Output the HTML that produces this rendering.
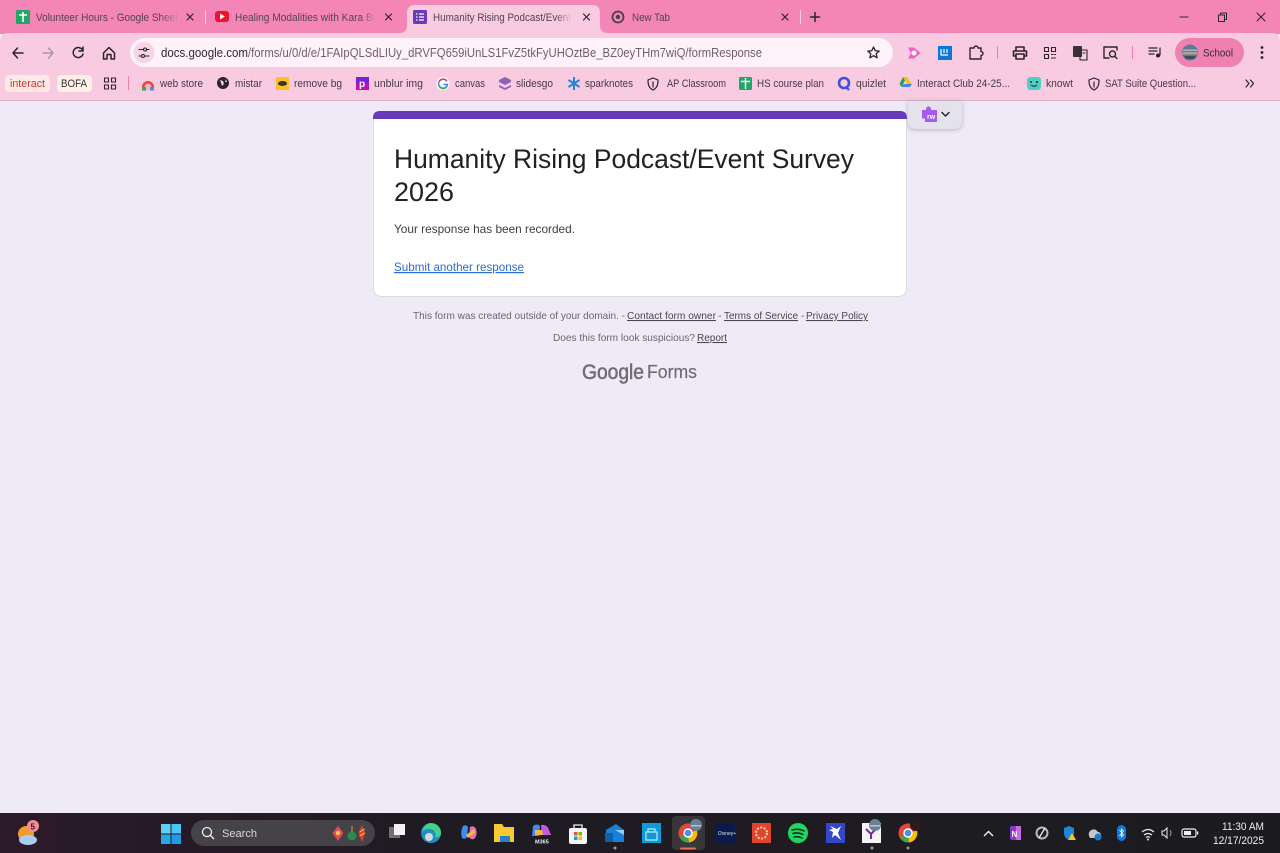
<!DOCTYPE html>
<html><head><meta charset="utf-8"><title>Humanity Rising Podcast/Event Survey 2026</title>
<style>
html,body{margin:0;padding:0;width:1280px;height:853px;overflow:hidden;background:#efeaf8}
svg{display:block;position:absolute;left:0;top:0}
text{font-family:"Liberation Sans",sans-serif}
.t{font-size:11px;fill:#54444e}
.tb{font-size:11px;fill:#463a42}
.ic{fill:none;stroke:#2c2428;stroke-linecap:round;stroke-linejoin:round}
.ft{font-size:10.5px;fill:#6a666c}
.fl{font-size:10.5px;fill:#4a464c;text-decoration:underline}
</style></head><body>
<svg width="1280" height="853" viewBox="0 0 1280 853" xmlns="http://www.w3.org/2000/svg">
<defs>
<linearGradient id="tbg" x1="0" x2="1" y1="0" y2="0"><stop offset="0" stop-color="#2b1a2b"/><stop offset=".35" stop-color="#1f1b22"/><stop offset="1" stop-color="#1c1c20"/></linearGradient>
<linearGradient id="f1" x1="0" x2="1" y1="0" y2="0"><stop offset="0" stop-color="#f386b6" stop-opacity="0"/><stop offset="1" stop-color="#f386b6"/></linearGradient>
<linearGradient id="f2" x1="0" x2="1" y1="0" y2="0"><stop offset="0" stop-color="#f8cbe0" stop-opacity="0"/><stop offset="1" stop-color="#f8cbe0"/></linearGradient>
</defs>
<rect width="1280" height="853" fill="#efeaf8"/>
<!-- chrome -->
<rect width="1280" height="34" fill="#f386b6"/>
<path d="M0 100V42Q0 33 9 33H1271Q1280 33 1280 42V100Z" fill="#f8cbe0"/>
<rect y="100" width="1280" height="1" fill="#d9b6c9"/>
<!-- active tab -->
<path d="M399 33Q407 33 407 25V13Q407 5 415 5H592Q600 5 600 13V25Q600 33 608 33Z" fill="#f8cbe0"/>
<!-- tab 1 -->
<rect x="16" y="10" width="14" height="14" rx="1.5" fill="#23a566"/><path d="M23 12V22M19 15H27" stroke="#fff" stroke-width="1.6"/>
<text x="36" y="21" class="t" textLength="142" lengthAdjust="spacingAndGlyphs">Volunteer Hours - Google Sheet</text>
<rect x="160" y="8" width="19" height="18" fill="url(#f1)"/>
<path d="M187 14l6 6M193 14l-6 6" class="ic" stroke-width="1.2"/>
<rect x="205" y="10" width="1" height="14" fill="#fbd0e2"/>
<!-- tab 2 -->
<rect x="215" y="11" width="14" height="11" rx="3" fill="#f00f2c"/><path d="M220 13.5v6l5-3z" fill="#fff"/>
<text x="235" y="21" class="t" textLength="140" lengthAdjust="spacingAndGlyphs">Healing Modalities with Kara Bi</text>
<rect x="360" y="8" width="16" height="18" fill="url(#f1)"/>
<path d="M385.500 14l6 6M391.500 14l-6 6" class="ic" stroke-width="1.2"/>
<!-- tab 3 -->
<rect x="413" y="10" width="14" height="14" rx="1.5" fill="#673ab7"/><path d="M416 14h1.4M416 17h1.4M416 20h1.4M419 14h5M419 17h5M419 20h5" stroke="#fff" stroke-width="1.3"/>
<text x="433" y="21" class="t" textLength="138" lengthAdjust="spacingAndGlyphs">Humanity Rising Podcast/Event</text>
<rect x="556" y="8" width="16" height="18" fill="url(#f2)"/>
<path d="M583.500 14l6 6M589.500 14l-6 6" class="ic" stroke-width="1.2"/>
<!-- tab 4 -->
<circle cx="618" cy="17" r="5.500" fill="none" stroke="#4a4048" stroke-width="1.800"/><circle cx="618" cy="17" r="2.200" fill="#4a4048"/>
<text x="632" y="21" class="t" textLength="38" lengthAdjust="spacingAndGlyphs">New Tab</text>
<path d="M782 14l6 6M788 14l-6 6" class="ic" stroke-width="1.2"/>
<rect x="800" y="10" width="1" height="14" fill="#fbd0e2"/>
<path d="M815 12.500v9M810.500 17h9" class="ic" stroke-width="1.500"/>
<!-- window controls -->
<path d="M1180 17h8" class="ic" stroke-width="1"/>
<path d="M1218.500 15h6v6.500h-6zM1220.500 15v-2h6v6.500h-2" class="ic" stroke-width="1"/>
<path d="M1257 13l8 8M1265 13l-8 8" class="ic" stroke-width="1"/>
<!-- nav -->
<path d="M23 53H13M17.500 48L13 53l4.500 5" class="ic" stroke-width="1.500"/>
<path d="M43 53h10M48.500 48L53 53l-4.500 5" fill="none" stroke="#b095a4" stroke-width="1.500" stroke-linecap="round" stroke-linejoin="round"/>
<path d="M82.500 50a5 5 0 1 0 .5 4M83 47v4h-4" class="ic" stroke-width="1.500"/>
<path d="M103.500 53L109 47.500 114.500 53V59H111V54.500H107V59H103.500Z" class="ic" stroke-width="1.500"/>
<!-- omnibox -->
<rect x="130" y="38" width="763" height="29" rx="14.500" fill="#fff2f8"/>
<circle cx="144" cy="52.500" r="10.500" fill="#f8d5e6"/>
<path d="M139 49.500h4M147 49.500h2M139 56h2M145 56h4" class="ic" stroke-width="1.100"/><circle cx="145" cy="49.500" r="1.500" class="ic" stroke-width="1.100"/><circle cx="143" cy="56" r="1.500" class="ic" stroke-width="1.100"/>
<text x="161" y="57" font-size="13" fill="#32282e" textLength="87" lengthAdjust="spacingAndGlyphs">docs.google.com</text>
<text x="248" y="57" font-size="13" fill="#6f6068" textLength="514" lengthAdjust="spacingAndGlyphs">/forms/u/0/d/e/1FAIpQLSdLIUy_dRVFQ659iUnLS1FvZ5tkFyUHOztBe_BZ0eyTHm7wiQ/formResponse</text>
<path d="M873.500 47l1.700 3.700 4 .4-3 2.700.9 4-3.600-2.100-3.600 2.100.9-4-3-2.700 4-.4z" class="ic" stroke-width="1.300"/>
<!-- ext icons -->
<path d="M908 47.500h6l6.500 5.500-6.500 5.500h-6l3-5.500z" fill="#f060c8"/><circle cx="914" cy="53" r="2.500" fill="#fff"/>
<rect x="938" y="46" width="14" height="14" fill="#0a78d8"/><path d="M941 49v6h7M944 49v4M947 49v4" stroke="#fff" stroke-width="1.200" fill="none"/>
<path d="M970 48h4a2 2 0 0 1 4 0h3v3.500a2 2 0 0 1 0 4V59h-11z" class="ic" stroke-width="1.400"/>
<rect x="997" y="46" width="1" height="13" fill="#ee7fb0"/>
<path d="M1016 51v-4h8v4M1016 56h-2.500v-5h13v5H1024M1016 54h8v5h-8z" class="ic" stroke-width="1.600"/>
<path d="M1044.500 47.500h4v4h-4zM1051.500 47.500h4v4h-4zM1044.500 54.500h4v4h-4zM1051.500 54.500h1.500M1054.500 54.500h1M1051.500 58h4" class="ic" stroke-width="1.100"/>
<rect x="1073" y="46" width="9" height="11" rx="1" fill="#3a3036"/><path d="M1082 50h5v10h-7v-3" class="ic" stroke-width="1.100"/><path d="M1083 53h2" class="ic" stroke-width="1"/>
<path d="M1109 58h-5V47h13v3" class="ic" stroke-width="1.400"/><circle cx="1112.500" cy="54" r="3" class="ic" stroke-width="1.400"/><path d="M1115 56.500l2 2" class="ic" stroke-width="1.400"/>
<rect x="1132" y="46" width="1" height="13" fill="#ee7fb0"/>
<path d="M1149 48h8M1149 51h8M1149 54h5" class="ic" stroke-width="1.200"/><path d="M1160 48v7" class="ic" stroke-width="1.200"/><circle cx="1158" cy="55.500" r="2" fill="#2c2428"/>
<rect x="1175" y="38" width="69" height="29" rx="14.500" fill="#ee81b1"/>
<circle cx="1190" cy="52.500" r="8" fill="#5f7a92"/><path d="M1182.500 52h15v2.500h-15z" fill="#b9a08e"/><path d="M1183 49.500h14v1.500h-14z" fill="#a5b8c8"/><path d="M1184 56h12l-2 3h-8z" fill="#3c4f60"/>
<text x="1203" y="56.500" font-size="11" fill="#3c2c36" textLength="30" lengthAdjust="spacingAndGlyphs">School</text>
<circle cx="1262" cy="47.500" r="1.400" fill="#2c2428"/><circle cx="1262" cy="52.500" r="1.400" fill="#2c2428"/><circle cx="1262" cy="57.500" r="1.400" fill="#2c2428"/>
<!-- bookmarks -->
<rect x="5" y="75" width="45" height="17" rx="4" fill="#fdeae6"/>
<text x="10" y="87" font-size="11" fill="#d3322c" textLength="35" lengthAdjust="spacingAndGlyphs">interact</text>
<rect x="57" y="75" width="35" height="17" rx="4" fill="#fdf0e4"/>
<text x="61" y="87" font-size="11" fill="#3c3038" textLength="26" lengthAdjust="spacingAndGlyphs">BOFA</text>
<path d="M104.500 78h4v4h-4zM111.500 78h4v4h-4zM104.500 85h4v4h-4zM111.500 85h4v4h-4z" class="ic" stroke-width="1.100"/>
<rect x="128" y="76" width="1" height="14" fill="#ee7fb0"/>
<path d="M142 90v-3a6 6 0 0 1 12 0v3z" fill="#e9b9c8"/><path d="M142 87a6 6 0 0 1 6-6 6 6 0 0 1 6 6h-2.500a3.500 3.500 0 0 0-7 0z" fill="#e8453c"/><rect x="142" y="87" width="4" height="3.500" fill="#34a853"/><rect x="150" y="87" width="4" height="3.500" fill="#4a90e2"/>
<text x="160" y="87" class="tb" textLength="43" lengthAdjust="spacingAndGlyphs">web store</text>
<circle cx="223" cy="83" r="6" fill="#2c2428"/><path d="M220 80l3 1 1 3-2 2zM226 79l1 3-2 0z" fill="#f8cbe0"/>
<text x="235" y="87" class="tb" textLength="27" lengthAdjust="spacingAndGlyphs">mistar</text>
<rect x="276" y="77" width="13" height="13" rx="1" fill="#f8c02c"/><ellipse cx="282.500" cy="83.500" rx="4.500" ry="2.500" fill="#3e3420"/>
<text x="294" y="87" class="tb" textLength="48" lengthAdjust="spacingAndGlyphs">remove bg</text>
<rect x="356" y="77" width="13" height="13" fill="#7a1fd8"/><rect x="356" y="84" width="13" height="6" fill="#c012b0"/><text x="359" y="87" font-size="10" font-weight="bold" fill="#fff">p</text>
<text x="374" y="87" class="tb" textLength="49" lengthAdjust="spacingAndGlyphs">unblur img</text>
<circle cx="443" cy="83.500" r="6.500" fill="#fff"/><path d="M447 81.500a4.500 4.500 0 1 0 .5 3h-4" fill="none" stroke="#4285f4" stroke-width="1.500"/><path d="M439.500 81a4.500 4.500 0 0 1 7-.5" fill="none" stroke="#ea4335" stroke-width="1.500"/><path d="M439 85.500a4.500 4.500 0 0 0 7 2" fill="none" stroke="#34a853" stroke-width="1.500"/>
<text x="455" y="87" class="tb" textLength="30" lengthAdjust="spacingAndGlyphs">canvas</text>
<path d="M505 77l6 3v2l-6 3-6-3v-2zM499 85l6 3 6-3v2l-6 3-6-3z" fill="#8f62b8"/>
<text x="516" y="87" class="tb" textLength="37" lengthAdjust="spacingAndGlyphs">slidesgo</text>
<path d="M574 77v13M568.500 80l11 7M579.500 80l-11 7" stroke="#2583d8" stroke-width="2" fill="none"/>
<text x="585" y="87" class="tb" textLength="48" lengthAdjust="spacingAndGlyphs">sparknotes</text>
<path d="M653 78l5 2c0 5-1 8-5 10-4-2-5-5-5-10zM653 82v5" class="ic" stroke-width="1.200"/>
<text x="667" y="87" class="tb" textLength="59" lengthAdjust="spacingAndGlyphs">AP Classroom</text>
<rect x="739" y="77" width="13" height="13" rx="1.500" fill="#23a566"/><path d="M745.500 78v11M741 81.500h9" stroke="#fff" stroke-width="1.400"/>
<text x="757" y="87" class="tb" textLength="67" lengthAdjust="spacingAndGlyphs">HS course plan</text>
<circle cx="844" cy="83" r="5" fill="none" stroke="#3d4fe0" stroke-width="2.600"/><path d="M846 87l3 3" stroke="#3d4fe0" stroke-width="2.200"/>
<text x="856" y="87" class="tb" textLength="30" lengthAdjust="spacingAndGlyphs">quizlet</text>
<path d="M903 77h4l5 8h-4z" fill="#fbbc04"/><path d="M903 77l2 3.500-3.500 6.500-2-3z" fill="#1ea362"/><path d="M901.500 87l2-3h8.500l-2 3z" fill="#4285f4"/>
<text x="917" y="87" class="tb" textLength="93" lengthAdjust="spacingAndGlyphs">Interact Club 24-25...</text>
<rect x="1027" y="77" width="14" height="13" rx="3" fill="#4fcfc0"/><circle cx="1031" cy="82" r="1" fill="#223"/><circle cx="1037" cy="82" r="1" fill="#223"/><path d="M1031 85q3 2.500 6 0" stroke="#223" fill="none"/>
<text x="1046" y="87" class="tb" textLength="27" lengthAdjust="spacingAndGlyphs">knowt</text>
<path d="M1094 78l5 2c0 5-1 8-5 10-4-2-5-5-5-10zM1094 82v5" class="ic" stroke-width="1.200"/>
<text x="1105" y="87" class="tb" textLength="91" lengthAdjust="spacingAndGlyphs">SAT Suite Question...</text>
<path d="M1246 80l3 3.500-3 3.500M1250.500 80l3 3.500-3 3.500" class="ic" stroke-width="1.200"/>
<!-- floating extension -->
<path d="M908 101h54v20q0 8-8 8h-38q-8 0-8-8z" fill="#e4e2ec" filter="drop-shadow(0 1px 2px rgba(0,0,0,.25))"/>
<path d="M922 110h4v-1a2.500 2.500 0 0 1 5 0v1h6v12h-12v-3.500h-3z" fill="#a45cf0"/>
<text x="927" y="119" font-size="7" font-weight="bold" fill="#fff">rw</text>
<path d="M942 112.500l3.500 3.500 3.500-3.500" class="ic" stroke-width="1.500"/>
<!-- card -->
<rect x="373.500" y="111.500" width="533" height="185" rx="8" fill="#fff" stroke="#dadce0"/>
<path d="M373 119v-1q0-7 7-7h520q7 0 7 7v1z" fill="#673ab7"/>
<text x="394" y="168" font-size="27" fill="#202124" textLength="460" lengthAdjust="spacingAndGlyphs">Humanity Rising Podcast/Event Survey</text>
<text x="394" y="201" font-size="27" fill="#202124" textLength="60" lengthAdjust="spacingAndGlyphs">2026</text>
<text x="394" y="233" font-size="12" fill="#3c4043" textLength="181" lengthAdjust="spacingAndGlyphs">Your response has been recorded.</text>
<text x="394" y="271" font-size="12" fill="#2a6fd8" text-decoration="underline" textLength="130" lengthAdjust="spacingAndGlyphs">Submit another response</text>
<!-- footer -->
<text x="413" y="319" class="ft" textLength="212" lengthAdjust="spacingAndGlyphs">This form was created outside of your domain. -</text>
<text x="627" y="319" class="fl" textLength="89" lengthAdjust="spacingAndGlyphs">Contact form owner</text>
<text x="718" y="319" class="ft">-</text>
<text x="724" y="319" class="fl" textLength="74" lengthAdjust="spacingAndGlyphs">Terms of Service</text>
<text x="801" y="319" class="ft">-</text>
<text x="806" y="319" class="fl" textLength="62" lengthAdjust="spacingAndGlyphs">Privacy Policy</text>
<text x="553" y="341" class="ft" textLength="142" lengthAdjust="spacingAndGlyphs">Does this form look suspicious?</text>
<text x="697" y="341" class="fl" textLength="30" lengthAdjust="spacingAndGlyphs">Report</text>
<text x="582" y="379" font-size="21" fill="#6f6d72" stroke="#6f6d72" stroke-width=".5" textLength="62" lengthAdjust="spacingAndGlyphs">Google</text>
<text x="647" y="378" font-size="18" fill="#6f6d72" stroke="#6f6d72" stroke-width=".2" textLength="50" lengthAdjust="spacingAndGlyphs">Forms</text>
<!-- taskbar -->
<rect y="813" width="1280" height="40" fill="url(#tbg)"/>
<circle cx="26" cy="834" r="8" fill="#f29a2e"/><ellipse cx="28" cy="840" rx="9" ry="5" fill="#a8cdf0"/><circle cx="33" cy="826" r="6" fill="#f48a96"/><text x="30.500" y="829.500" font-size="8" font-weight="bold" fill="#2a1a20">5</text>
<rect x="161" y="824" width="9.500" height="9.500" fill="#5ed0f8"/><rect x="171.500" y="824" width="9.500" height="9.500" fill="#4cc4f5"/><rect x="161" y="834.500" width="9.500" height="9.500" fill="#28a6ea"/><rect x="171.500" y="834.500" width="9.500" height="9.500" fill="#1f9ae5"/>
<rect x="191" y="820" width="184" height="26" rx="13" fill="#454347"/>
<circle cx="207" cy="832" r="4.500" fill="none" stroke="#eee" stroke-width="1.300"/><path d="M210.500 835.500l3.500 3.500" stroke="#eee" stroke-width="1.300"/>
<text x="222" y="837" font-size="11" fill="#d8d6da" textLength="35" lengthAdjust="spacingAndGlyphs">Search</text>
<path d="M338 826l5.500 7-5.500 8-5.500-8z" fill="#e24a5a"/><circle cx="338" cy="833" r="2.200" fill="#f5d040"/><circle cx="352" cy="836" r="4.500" fill="#2c8a50"/><path d="M352 826v6" stroke="#c8a040" stroke-width="1"/><path d="M362 825l3.500 8-3.500 9-3.500-9z" fill="#d8442c"/><path d="M359.500 832l5-3M359.500 836l5-3" stroke="#f5d040" stroke-width="1"/>
<rect x="389" y="827" width="11" height="11" fill="#707074"/><rect x="394" y="824" width="11" height="11" fill="#f2f2f2"/>
<circle cx="431" cy="833" r="10" fill="#1a8fc8"/><path d="M431 823a10 10 0 0 1 10 10c0 3-3 5-6 4 2-4-1-8-6-8-4 0-6 2-7 3 1-5 5-9 9-9z" fill="#47d08a"/><circle cx="429" cy="837" r="4" fill="#d8d8d8"/>
<path d="M463 826q3-2 5 1l-1 10q-2 3-5 1-2-6 1-12z" fill="#3f8cf0"/><path d="M470 827q4-2 6 2 2 6-2 10-3 1-5-2z" fill="#e96ac0"/><path d="M466 835l8-6 1 4-7 5z" fill="#f5b640"/>
<path d="M494 824h8l2 3h10v15h-20z" fill="#f8c930"/><rect x="500" y="836" width="10" height="6" fill="#2382c8"/>
<path d="M533 826q4-3 7 0l-1 10h-7z" fill="#3f8cf0"/><path d="M541 825q6-1 8 5l2 5h-9z" fill="#c85ae0"/><path d="M535 830l7 0 1 5h-8z" fill="#f5b640"/><text x="535" y="843.500" font-size="5.500" font-weight="bold" fill="#eee">M365</text>
<rect x="569" y="828" width="18" height="16" rx="2" fill="#f5f5f5"/><path d="M574 828v-3h8v3" fill="none" stroke="#eee" stroke-width="1.300"/><rect x="574" y="832" width="3.500" height="3.500" fill="#e8502a"/><rect x="578.500" y="832" width="3.500" height="3.500" fill="#7ab800"/><rect x="574" y="836.500" width="3.500" height="3.500" fill="#00a4ef"/><rect x="578.500" y="836.500" width="3.500" height="3.500" fill="#ffb900"/>
<path d="M606 830l10-6 8 6v12h-18z" fill="#1a7fd8"/><rect x="605" y="833" width="8" height="9" fill="#0f5fa8"/><path d="M615 830h9v5z" fill="#8fd0f5"/><circle cx="615" cy="848" r="1.500" fill="#999"/>
<rect x="642" y="823" width="19" height="20" fill="#0d9bd8"/><path d="M646 832h11v8h-11zM648 829h7v3h-7z" fill="none" stroke="#bfe6f8" stroke-width="1.200"/>
<rect x="672" y="816" width="33" height="34" rx="4" fill="#38363a"/>
<circle cx="688" cy="833" r="9.500" fill="#e8463a"/><path d="M688 833l-8.200 4.500A9.500 9.500 0 0 0 689 842.500z" fill="#34a853"/><path d="M688 833l8.800-2.500A9.500 9.500 0 0 1 689 842.500z" fill="#fbbc04"/><circle cx="688" cy="833" r="4" fill="#4a90e8" stroke="#fff" stroke-width="1.400"/>
<circle cx="696" cy="825" r="6" fill="#6a8094"/><path d="M691 825h10v1.500h-10z" fill="#b9c4ce"/>
<rect x="680" y="847.500" width="16" height="2" rx="1" fill="#e8704a"/>
<rect x="715" y="823" width="20" height="20" fill="#0b1a4a"/><text x="718" y="835" font-size="5" fill="#cfe0f8">Disney+</text>
<rect x="752" y="823" width="19" height="20" fill="#e0452a"/><circle cx="761.500" cy="833" r="5.500" fill="none" stroke="#f8d0c0" stroke-width="2" stroke-dasharray="2 1.500"/>
<circle cx="798" cy="833" r="10" fill="#1ed760"/><path d="M792 830q6-2 12 1M793 833.500q5-1.500 10 1M794 837q4-1 8 1" stroke="#18261c" stroke-width="1.500" fill="none" stroke-linecap="round"/>
<rect x="826" y="823" width="19" height="20" fill="#3347c8"/><path d="M830 826l7 3 4-3-3 7 3 7-6-5-3 3 1-6-4-2 4-1z" fill="#fff"/>
<rect x="862" y="823" width="19" height="20" fill="#f4f4f6"/><path d="M866 829l5 5 5-5M871 834v5" stroke="#7a2aa0" stroke-width="2" fill="none"/><circle cx="875" cy="825" r="6" fill="#6a8094"/><path d="M870 825h10v1.500h-10z" fill="#b9c4ce"/><circle cx="872" cy="848" r="1.500" fill="#999"/>
<circle cx="908" cy="833" r="9.500" fill="#e8463a"/><path d="M908 833l-8.200 4.500A9.500 9.500 0 0 0 909 842.500z" fill="#34a853"/><path d="M908 833l8.800-2.500A9.500 9.500 0 0 1 909 842.500z" fill="#fbbc04"/><circle cx="908" cy="833" r="4" fill="#4a90e8" stroke="#fff" stroke-width="1.400"/><circle cx="916" cy="825" r="6" fill="#2a1c1c"/><circle cx="908" cy="848" r="1.500" fill="#999"/>
<path d="M984 836l4.500-4.500 4.500 4.500" fill="none" stroke="#eee" stroke-width="1.400"/>
<rect x="1010" y="826" width="11" height="14" rx="2" fill="#8a3ac8"/><rect x="1016" y="826" width="5" height="14" fill="#c86ae0"/><text x="1011.500" y="837" font-size="8" font-weight="bold" fill="#fff">N</text>
<circle cx="1042" cy="833" r="5.500" fill="none" stroke="#bbb" stroke-width="2"/><path d="M1039 838l6-10" stroke="#eee" stroke-width="1.300"/>
<path d="M1069 826l5 2v5q0 5-5 7-5-2-5-7v-5z" fill="#1e88d8"/><path d="M1072 833l4 7h-8z" fill="#f5c820"/>
<path d="M1089 836a5 5 0 0 1 7-6l2 2a3 3 0 0 1 0 6h-8z" fill="#c8c8cc"/><circle cx="1098" cy="837" r="3.500" fill="#1a7ad8"/>
<rect x="1117" y="825" width="9" height="16" rx="4.500" fill="#0a7ae0"/><path d="M1119.500 830l4 5-2 2v-8l2 2-4 5" fill="none" stroke="#fff" stroke-width=".8"/>
<path d="M1142 832q6-5 12 0M1144 835q4-3 8 0M1146 837.500q2-1.500 4 0" fill="none" stroke="#eee" stroke-width="1.200"/><circle cx="1148" cy="839.500" r="1" fill="#eee"/>
<path d="M1162 831h2l3-3v10l-3-3h-2z" fill="none" stroke="#eee" stroke-width="1"/><path d="M1170 830q2 3 0 6" fill="none" stroke="#999"/>
<rect x="1182" y="829" width="14" height="8" rx="2" fill="none" stroke="#eee" stroke-width="1.200"/><rect x="1184" y="831" width="7" height="4" fill="#eee"/><rect x="1197" y="831.500" width="1.300" height="3" fill="#eee"/>
<text x="1264" y="830" font-size="11" fill="#eee" text-anchor="end" textLength="42" lengthAdjust="spacingAndGlyphs">11:30 AM</text>
<text x="1264" y="844" font-size="11" fill="#eee" text-anchor="end" textLength="51" lengthAdjust="spacingAndGlyphs">12/17/2025</text>
</svg>
</body></html>
